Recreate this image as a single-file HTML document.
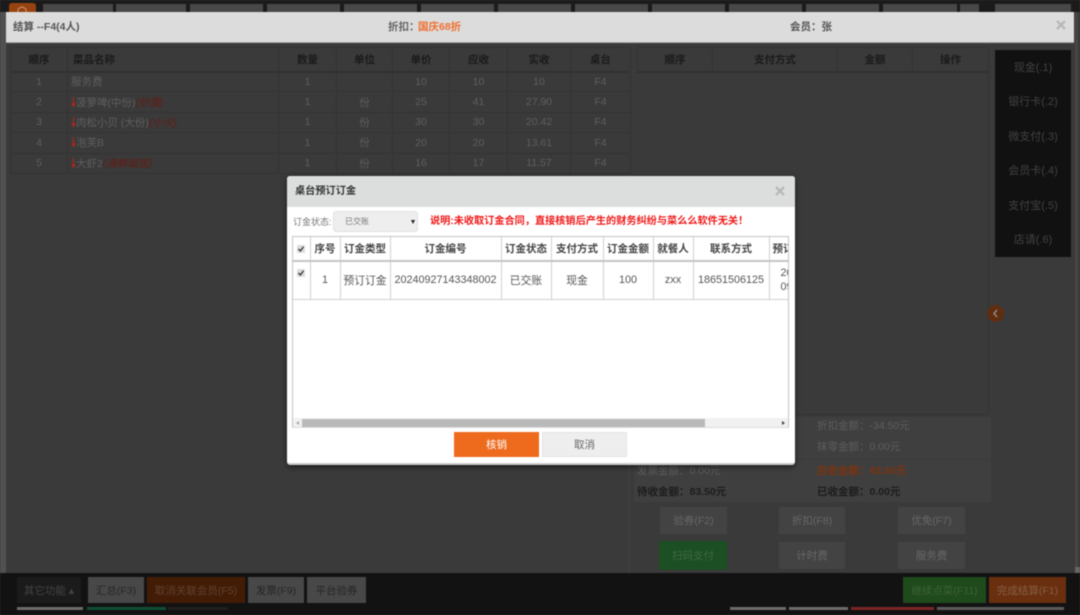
<!DOCTYPE html>
<html lang="zh">
<head>
<meta charset="utf-8">
<title>结算</title>
<style>
html,body{margin:0;padding:0;width:1080px;height:615px;overflow:hidden;background:#3a3a3a}
*{box-sizing:border-box}
#wrap{position:absolute;left:0;top:0;width:1080px;height:615px;overflow:hidden;filter:blur(.5px);font-family:"Liberation Sans","Noto Sans CJK SC",sans-serif;font-size:10.5px}
.a{position:absolute}
.c{position:absolute;display:flex;align-items:center;justify-content:center;white-space:nowrap}
.t{position:absolute;white-space:nowrap;line-height:14px}
table{border-collapse:collapse;table-layout:fixed;position:absolute}
td,th{padding:0;text-align:center;overflow:hidden;white-space:nowrap}
#lt td,#lt th,#rt th{border:1px solid #333}
#lt th,#rt th{height:24px;color:#1a1a1a;font-weight:bold;font-size:10.5px;background:#3a3a3a;border-bottom:2px solid #313131}
#lt td{height:20.4px;color:#5f5f5f;font-size:10.5px}
#lt td.n{text-align:left;padding-left:3px}
#lt i{color:#661a12}
.ar{display:inline-block;vertical-align:-1px;margin-right:0}
.tab{position:absolute;top:4px;height:10px;background:#484848}
.pay{position:absolute;left:995px;width:76px;height:34.6px;display:flex;align-items:center;justify-content:center;color:#424242;font-size:11px}
.sum{position:absolute;font-size:10.5px;white-space:nowrap;line-height:14px}
.btn{position:absolute;background:#434343;color:#686868;display:flex;align-items:center;justify-content:center;font-size:10.5px}
.bb{position:absolute;top:577px;height:26px;background:#484848;color:#252525;display:flex;align-items:center;justify-content:center;font-size:10.5px;white-space:nowrap}
.ul{position:absolute;top:607px;height:3px}
#dt th{height:24px;font-size:10.5px;color:#444;font-weight:bold;border-right:1px solid #d0d0d0;border-bottom:2px solid #c4c4c4;background:#fff}
#dt td{height:38px;font-size:10.8px;color:#555;border-right:1px solid #d0d0d0;border-bottom:1px solid #d0d0d0;background:#fff}
.cb{display:block;margin:auto}
</style>
</head>
<body>
<div id="wrap">
  <!-- page background -->
  <div class="a" style="left:0;top:0;width:1080px;height:12px;background:#1b1b1b"></div>
  <div class="a" style="left:9px;top:3px;width:27px;height:10px;background:#97420f;border-radius:3px 3px 0 0"></div>
  <svg class="a" style="left:15px;top:5px" width="14" height="8" viewBox="0 0 14 8"><path d="M3 8V5a2 2 0 0 1 2-2 2.5 2.5 0 0 1 4 0 2 2 0 0 1 2 2v3" fill="none" stroke="#c99a7c" stroke-width="1"/></svg>
  <div class="tab" style="left:43px;width:70px"></div>
  <div class="tab" style="left:116px;width:70px"></div>
  <div class="tab" style="left:190px;width:73px"></div>
  <div class="tab" style="left:267px;width:73px"></div>
  <div class="tab" style="left:344px;width:73px"></div>
  <div class="tab" style="left:421px;width:73px"></div>
  <div class="tab" style="left:498px;width:73px"></div>
  <div class="tab" style="left:575px;width:73px"></div>
  <div class="tab" style="left:652px;width:73px"></div>
  <div class="tab" style="left:729px;width:73px"></div>
  <div class="tab" style="left:806px;width:73px"></div>
  <div class="tab" style="left:883px;width:74px"></div>
  <div class="tab" style="left:960px;width:19px"></div>
  <div class="tab" style="left:995px;width:76px"></div>

  <!-- left / right strips -->
  <div class="a" style="left:0;top:12px;width:6px;height:561px;background:#505050"></div>
  <div class="a" style="left:1074px;top:12px;width:6px;height:561px;background:#3a3a3a"></div>
  <div class="a" style="left:1075px;top:12px;width:3px;height:561px;background:#464646"></div>
  <div class="a" style="left:1075px;top:567px;width:5px;height:14px;background:#666"></div>

  <!-- settlement modal -->
  <div class="a" style="left:6px;top:12px;width:1068px;height:31px;background:#dcdcdc;border-bottom:1px solid #aaa"></div>
  <div class="t" style="left:13px;top:20px;color:#555;font-weight:bold;font-size:10.5px">结算 --F4(4人)</div>
  <div class="t" style="left:388px;top:20px;color:#666;font-weight:bold;font-size:10.5px">折扣：</div>
  <div class="t" style="left:418px;top:20px;color:#f07030;font-weight:bold;font-size:10.5px">国庆68折</div>
  <div class="t" style="left:790px;top:20px;color:#555;font-weight:bold;font-size:10.5px">会员：张</div>
  <svg class="a" style="left:1056px;top:20px" width="10" height="10" viewBox="0 0 10 10"><path d="M1 1L9 9M9 1L1 9" stroke="#b8b8b8" stroke-width="2.4"/></svg>

  <div class="a" style="left:6px;top:43px;width:1068px;height:530px;background:#3a3a3a"></div>
  <div class="a" style="left:629px;top:174px;width:1px;height:399px;background:#424242"></div>
  <div class="a" style="left:988px;top:71px;width:1px;height:343px;background:#343434"></div>

  <!-- dishes table -->
  <table id="lt" style="left:10px;top:47px;width:620px">
    <colgroup><col style="width:57px"><col style="width:211px"><col style="width:58px"><col style="width:56px"><col style="width:57px"><col style="width:58px"><col style="width:63px"><col style="width:60px"></colgroup>
    <tr><th>顺序</th><th style="text-align:left;padding-left:5px">菜品名称</th><th>数量</th><th>单位</th><th>单价</th><th>应收</th><th>实收</th><th>桌台</th></tr>
    <tr><td>1</td><td class="n">服务费</td><td>1</td><td></td><td>10</td><td>10</td><td>10</td><td>F4</td></tr>
    <tr><td>2</td><td class="n"><svg class="ar" width="5" height="10" viewBox="0 0 5 10"><path d="M2.5 0V8M.7 6L2.5 9.5L4.3 6" fill="none" stroke="#a8281c" stroke-width="1.2"/></svg>菠萝啤(中份)<i>(炒蛋)</i></td><td>1</td><td>份</td><td>25</td><td>41</td><td>27.90</td><td>F4</td></tr>
    <tr><td>3</td><td class="n"><svg class="ar" width="5" height="10" viewBox="0 0 5 10"><path d="M2.5 0V8M.7 6L2.5 9.5L4.3 6" fill="none" stroke="#a8281c" stroke-width="1.2"/></svg>肉松小贝 (大份)<i>(小火)</i></td><td>1</td><td>份</td><td>30</td><td>30</td><td>20.42</td><td>F4</td></tr>
    <tr><td>4</td><td class="n"><svg class="ar" width="5" height="10" viewBox="0 0 5 10"><path d="M2.5 0V8M.7 6L2.5 9.5L4.3 6" fill="none" stroke="#a8281c" stroke-width="1.2"/></svg>泡芙B</td><td>1</td><td>份</td><td>20</td><td>20</td><td>13.61</td><td>F4</td></tr>
    <tr><td>5</td><td class="n"><svg class="ar" width="5" height="10" viewBox="0 0 5 10"><path d="M2.5 0V8M.7 6L2.5 9.5L4.3 6" fill="none" stroke="#a8281c" stroke-width="1.2"/></svg>大虾2<i>(海鲜焗饭)</i></td><td>1</td><td>份</td><td>16</td><td>17</td><td>11.57</td><td>F4</td></tr>
  </table>

  <!-- payment table -->
  <table id="rt" style="left:637px;top:47px;width:351px">
    <colgroup><col style="width:75px"><col style="width:125px"><col style="width:75px"><col style="width:76px"></colgroup>
    <tr><th>顺序</th><th>支付方式</th><th>金额</th><th>操作</th></tr>
  </table>
  <div class="a" style="left:637px;top:414px;width:352px;height:1px;background:#343434"></div>

  <!-- pay methods -->
  <div class="a" style="left:995px;top:50px;width:76px;height:207px;background:#111"></div>
  <div class="pay" style="top:50px">现金(.1)</div>
  <div class="pay" style="top:84px">银行卡(.2)</div>
  <div class="pay" style="top:119px">微支付(.3)</div>
  <div class="pay" style="top:153px">会员卡(.4)</div>
  <div class="pay" style="top:188px">支付宝(.5)</div>
  <div class="pay" style="top:222px">店请(.6)</div>

  <!-- collapse handle -->
  <div class="a" style="left:987px;top:305px;width:17px;height:17px;border-radius:50%;background:#5f2e11"></div>
  <svg class="a" style="left:992px;top:309px" width="7" height="9" viewBox="0 0 7 9"><path d="M5 1L2 4.5L5 8" fill="none" stroke="#9a9a9a" stroke-width="1.3"/></svg>

  <!-- summary -->
  <div class="a" style="left:634px;top:417px;width:357px;height:85px;background:#3f3f3f"></div>
  <div class="a" style="left:634px;top:459px;width:357px;height:1px;background:#3a3a3a"></div>
  <div class="sum" style="left:817px;top:419px;color:#5e5e5e">折扣金额：-34.50元</div>
  <div class="sum" style="left:817px;top:440px;color:#5e5e5e">抹零金额：0.00元</div>
  <div class="sum" style="left:637px;top:464px;color:#5e5e5e">发票金额：0.00元</div>
  <div class="sum" style="left:817px;top:464px;color:#7a3410;font-weight:bold">应收金额：83.50元</div>
  <div class="sum" style="left:637px;top:485px;color:#1c1c1c;font-weight:bold">待收金额：83.50元</div>
  <div class="sum" style="left:817px;top:485px;color:#1c1c1c;font-weight:bold">已收金额：0.00元</div>

  <!-- action buttons -->
  <div class="btn" style="left:660px;top:507px;width:67px;height:27px">验券(F2)</div>
  <div class="btn" style="left:779px;top:507px;width:66px;height:27px">折扣(F8)</div>
  <div class="btn" style="left:898px;top:507px;width:67px;height:27px">优免(F7)</div>
  <div class="btn" style="left:659px;top:541px;width:68px;height:29px;background:#1c4f23;color:#3f6a44">扫码支付</div>
  <div class="btn" style="left:779px;top:542px;width:66px;height:27px">计时费</div>
  <div class="btn" style="left:898px;top:542px;width:67px;height:27px">服务费</div>

  <!-- bottom bar -->
  <div class="a" style="left:0;top:573px;width:1080px;height:42px;background:#121212"></div>
  <div class="bb" style="left:17px;width:64px;background:#1b1b1b;color:#444">其它功能 ▴</div>
  <div class="bb" style="left:88px;width:56px">汇总(F3)</div>
  <div class="bb" style="left:147px;width:98px;background:#431c05;color:#5e4232">取消关联会员(F5)</div>
  <div class="bb" style="left:248px;width:56px">发票(F9)</div>
  <div class="bb" style="left:307px;width:59px">平台验券</div>
  <div class="bb" style="left:903px;width:83px;background:#1f4a1c;color:#3d6236">继续点菜(F11)</div>
  <div class="bb" style="left:989px;width:77px;background:#6a2f0e;color:#85604a">完成结算(F1)</div>
  <div class="ul" style="left:17px;width:66px;background:#6c6c6c"></div>
  <div class="ul" style="left:87px;width:79px;background:#104e33"></div>
  <div class="ul" style="left:168px;width:60px;background:#202020"></div>
  <div class="ul" style="left:730px;width:56px;background:#6c6c6c"></div>
  <div class="ul" style="left:789px;width:59px;background:#6c6c6c"></div>
  <div class="ul" style="left:851px;width:83px;background:#7c2626"></div>
  <div class="ul" style="left:937px;width:127px;background:#5c5c5c"></div>

  <!-- deposit dialog -->
  <div class="a" style="left:287px;top:176px;width:508px;height:289px;background:#fff;border-radius:3px;box-shadow:0 2px 6px rgba(0,0,0,.55);border-bottom:2px solid #ccc;overflow:hidden">
    <div class="a" style="left:0;top:0;width:508px;height:31px;background:#dcdedd"></div>
  </div>
  <div class="t" style="left:295px;top:185px;color:#333;font-weight:bold;font-size:10.2px">桌台预订订金</div>
  <svg class="a" style="left:775px;top:186px" width="10" height="10" viewBox="0 0 10 10"><path d="M1 1L9 9M9 1L1 9" stroke="#b8b8b8" stroke-width="2.4"/></svg>

  <div class="t" style="left:293px;top:215px;color:#777;font-size:9px">订金状态:</div>
  <div class="a" style="left:333px;top:211px;width:85px;height:21px;background:#eee;border:1px solid #e2e2e2;border-radius:3px"></div>
  <div class="t" style="left:345px;top:215px;color:#777;font-size:8px">已交账</div>
  <div class="a" style="left:411px;top:220px;width:0;height:0;border-left:2.5px solid transparent;border-right:2.5px solid transparent;border-top:4px solid #222"></div>
  <div class="t" style="left:430px;top:215px;color:#f01818;font-weight:bold;font-size:10.16px">说明:未收取订金合同，直接核销后产生的财务纠纷与菜么么软件无关！</div>

  <div class="a" style="left:292px;top:236px;width:497px;height:192px;border:1px solid #c4c4c4;border-bottom:1px solid #ddd;overflow:hidden;background:#fff">
    <table id="dt" style="left:0;top:0;width:559px">
      <colgroup><col style="width:17px"><col style="width:30px"><col style="width:50px"><col style="width:111px"><col style="width:50px"><col style="width:52px"><col style="width:50px"><col style="width:40px"><col style="width:76px"><col style="width:83px"></colgroup>
      <tr><th><svg class="cb" width="8" height="8" viewBox="0 0 8 8"><rect width="8" height="8" rx="1" fill="#ddd"/><path d="M1.5 4L3.4 6L6.5 1.8" fill="none" stroke="#333" stroke-width="1.3"/></svg></th><th>序号</th><th>订金类型</th><th>订金编号</th><th>订金状态</th><th>支付方式</th><th>订金金额</th><th>就餐人</th><th>联系方式</th><th style="text-align:left;padding-left:3px">预订时间</th></tr>
      <tr><td style="vertical-align:top;padding-top:7px"><svg class="cb" width="8" height="8" viewBox="0 0 8 8"><rect width="8" height="8" rx="1" fill="#ddd"/><path d="M1.5 4L3.4 6L6.5 1.8" fill="none" stroke="#333" stroke-width="1.3"/></svg></td><td>1</td><td>预订订金</td><td>20240927143348002</td><td>已交账</td><td>现金</td><td>100</td><td>zxx</td><td>18651506125</td><td style="text-align:left;padding-left:11px;line-height:14px">2024-<br>09-27</td></tr>
    </table>
    <div class="a" style="left:0;top:181px;width:495px;height:10px;background:#f1f1f1"></div>
    <div class="a" style="left:9px;top:182px;width:403px;height:8px;background:#b9b9b9"></div>
    <div class="a" style="left:3px;top:184px;width:0;height:0;border-top:2.5px solid transparent;border-bottom:2.5px solid transparent;border-right:3px solid #aaa"></div>
    <div class="a" style="left:489px;top:184px;width:0;height:0;border-top:2.5px solid transparent;border-bottom:2.5px solid transparent;border-left:3px solid #444"></div>
  </div>

  <div class="c" style="left:454px;top:432px;width:85px;height:25px;background:#ee6a1d;color:#fff;font-size:10.5px">核销</div>
  <div class="c" style="left:542px;top:432px;width:85px;height:25px;background:#eee;border:1px solid #e4e4e4;color:#666;font-size:10.5px">取消</div>
</div>
</body>
</html>
